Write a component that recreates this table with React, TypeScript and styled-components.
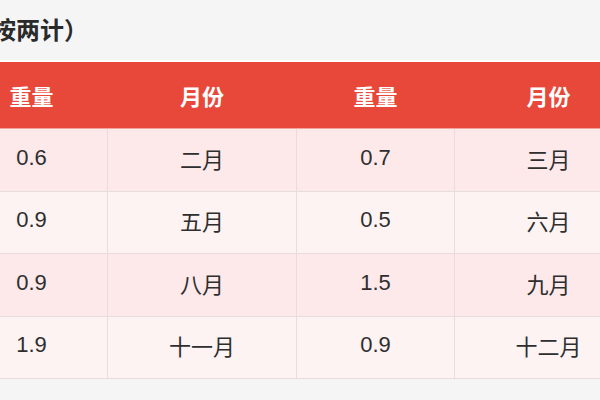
import React from "react";
import styled, { createGlobalStyle } from "styled-components";

const GlobalStyle = createGlobalStyle`
  html, body {
    margin: 0;
    padding: 0;
    background-color: #f6f5f5;
    overflow: hidden;
  }
  body {
    font-family: "Liberation Sans", "Noto Sans CJK SC", sans-serif;
  }
`;

const Page = styled.div`
  width: 600px;
  height: 400px;
  overflow: hidden;
  background-color: #f6f5f5;
`;

const Title = styled.h1`
  margin: 0 0 0 -8px;
  height: 60px;
  display: flex;
  align-items: center;
  padding-bottom: 4px;
  box-sizing: border-box;
  font-size: 24px;
  font-weight: bold;
  color: #2a2a2a;
  font-family: "Noto Sans CJK SC", sans-serif;
  white-space: nowrap;
`;

const Table = styled.table`
  margin-left: -45px;
  width: 687px;
  table-layout: fixed;
  border-collapse: collapse;
  border-top: 2px solid #fff;
`;

const HeadCell = styled.th`
  height: 66px;
  padding: 0;
  background-color: #e8483a;
  color: #fff;
  font-size: 22px;
  font-weight: bold;
  font-family: "Noto Sans CJK SC", sans-serif;
  text-align: center;
  border-bottom: 1px solid #f2a49b;
`;

const Row = styled.tr<{ $alt: boolean }>`
  background-color: ${(p) => (p.$alt ? "#fdf3f3" : "#fde8ea")};
`;

const Cell = styled.td`
  height: 62.5px;
  padding: 0 0 4px;
  text-align: center;
  font-size: 22px;
  color: #2e2e2e;
  border: 1px solid #e8dcdc;
  border-top: 1px solid #efe3e3;
  box-sizing: border-box;
`;

const rows = [
  ["0.6", "二月", "0.7", "三月"],
  ["0.9", "五月", "0.5", "六月"],
  ["0.9", "八月", "1.5", "九月"],
  ["1.9", "十一月", "0.9", "十二月"],
];

export default function App() {
  return (
    <>
      <GlobalStyle />
      <Page>
        <Title>按两计）</Title>
        <Table>
          <colgroup>
            <col style={{ width: 152 }} />
            <col style={{ width: 189 }} />
            <col style={{ width: 158 }} />
            <col style={{ width: 188 }} />
          </colgroup>
          <thead>
            <tr>
              <HeadCell>重量</HeadCell>
              <HeadCell>月份</HeadCell>
              <HeadCell>重量</HeadCell>
              <HeadCell>月份</HeadCell>
            </tr>
          </thead>
          <tbody>
            {rows.map((r, i) => (
              <Row key={i} $alt={i % 2 === 1}>
                {r.map((v, j) => (
                  <Cell key={j}>{v}</Cell>
                ))}
              </Row>
            ))}
          </tbody>
        </Table>
      </Page>
    </>
  );
}
